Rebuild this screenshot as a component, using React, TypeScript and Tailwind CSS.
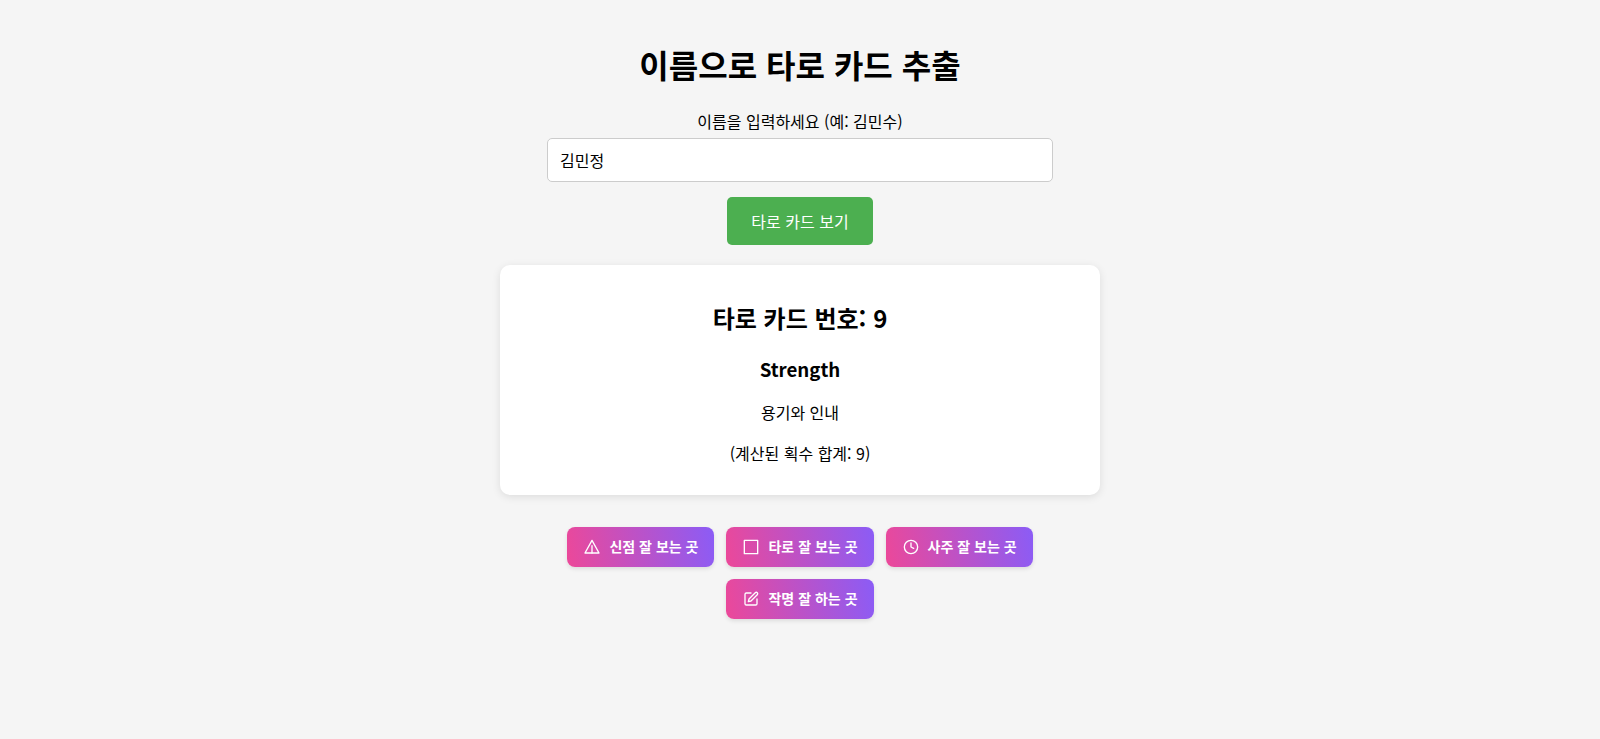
const links = [
  {
    label: "신점 잘 보는 곳",
    icon: (
      <>
        <path d="M12 2 L22.5 21 H1.5 Z" />
        <path d="M12 10 V21" />
      </>
    ),
  },
  { label: "타로 잘 보는 곳", icon: <rect x="2" y="2" width="20" height="20" /> },
  {
    label: "사주 잘 보는 곳",
    icon: (
      <>
        <circle cx="12" cy="12" r="10" />
        <path d="M12 6v6l4 2" />
      </>
    ),
  },
  {
    label: "작명 잘 하는 곳",
    icon: (
      <>
        <path d="M12 3H5a2 2 0 0 0-2 2v14a2 2 0 0 0 2 2h14a2 2 0 0 0 2-2v-7" />
        <path d="M18.4 2.6a2.1 2.1 0 1 1 3 3L12 15l-4 1 1-4Z" />
      </>
    ),
  },
];

export default function App() {
  return (
    <div lang="ko" className="min-h-[739px] bg-[#f5f5f5] pt-[20px] text-center text-black font-['Noto_Sans_CJK_KR','Noto_Sans',sans-serif]">
      <h1 className="my-[21px] text-[32px] leading-[46px] font-bold">이름으로 타로 카드 추출</h1>
      <label className="block text-[16px] leading-[23px] mt-[23px]">이름을 입력하세요 (예: 김민수)</label>
      <input
        className="block mx-auto mt-[5px] w-[506px] h-[44px] px-[12px] bg-white border border-[#ccc] rounded-[5px] text-[16px] outline-none"
        defaultValue="김민정"
      />
      <button className="block mx-auto mt-[15px] w-[146px] h-[48px] bg-[#4caf50] text-white text-[16px] rounded-[5px]">
        타로 카드 보기
      </button>
      <div className="mx-auto mt-[20px] w-[600px] h-[230px] bg-white rounded-[10px] shadow-[0_2px_8px_rgba(0,0,0,0.1)] pt-[20px]">
        <h2 className="mt-[15px] text-[24px] leading-[35px] font-bold">타로 카드 번호: 9</h2>
        <h3 className="mt-[20px] text-[18.7px] leading-[27px] font-bold">Strength</h3>
        <p className="mt-[19px] text-[16px] leading-[23px]">용기와 인내</p>
        <p className="mt-[18px] text-[16px] leading-[23px]">(계산된 획수 합계: 9)</p>
      </div>
      <div className="mx-auto mt-[32px] w-[600px] flex flex-wrap justify-center gap-[12px]">
        {links.map(({ label, icon }) => (
          <a
            key={label}
            href="#"
            className="flex items-center gap-[9px] h-[40px] pl-[17px] pr-[16px] rounded-[8px] bg-[linear-gradient(80deg,#ec4899,#8b5cf6)] text-white text-[14px] font-semibold shadow-[0_2px_4px_rgba(0,0,0,0.1)]"
          >
            <svg viewBox="0 0 24 24" fill="none" stroke="currentColor" strokeWidth="2" strokeLinecap="round" strokeLinejoin="round" className="w-[16px] h-[16px]">
              {icon}
            </svg>
            <span className="pb-[1px]">{label}</span>
          </a>
        ))}
      </div>
    </div>
  );
}
